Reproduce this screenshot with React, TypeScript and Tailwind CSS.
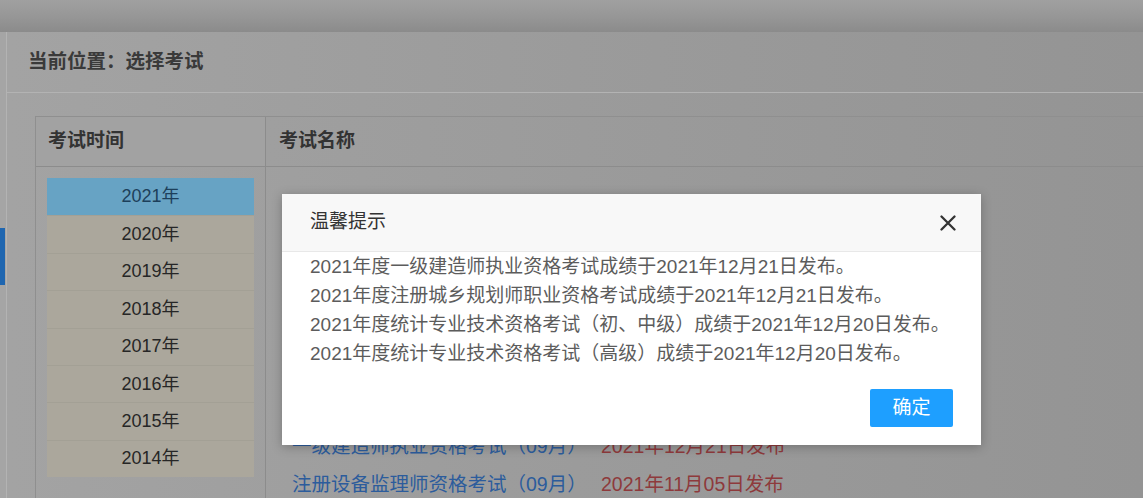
import React from "react";

const years = ["2021年", "2020年", "2019年", "2018年", "2017年", "2016年", "2015年", "2014年"];

const exams = [
  { name: "一级造价工程师考试（10月）", date: "2021年12月25日发布" },
  { name: "注册安全工程师考试（10月）", date: "2021年12月24日发布" },
  { name: "经济专业技术资格考试（10月）", date: "2021年12月22日发布" },
  { name: "注册城乡规划师考试（09月）", date: "2021年12月21日发布" },
  { name: "统计专业技术资格考试（10月）", date: "2021年12月20日发布" },
  { name: "监理工程师资格考试（09月）", date: "2021年12月10日发布" },
  { name: "一级建造师执业资格考试（09月）", date: "2021年12月21日发布" },
  { name: "注册设备监理师资格考试（09月）", date: "2021年11月05日发布" },
];

const notices = [
  "2021年度一级建造师执业资格考试成绩于2021年12月21日发布。",
  "2021年度注册城乡规划师职业资格考试成绩于2021年12月21日发布。",
  "2021年度统计专业技术资格考试（初、中级）成绩于2021年12月20日发布。",
  "2021年度统计专业技术资格考试（高级）成绩于2021年12月20日发布。",
];

export default function App() {
  return (
    <div className="relative w-[1143px] h-[498px] overflow-hidden bg-[#9a9a9a] font-['Liberation_Sans','Noto_Sans_CJK_SC',sans-serif]">
      <div className="flex flex-col h-full">
        <div className="h-[32px] shrink-0 bg-gradient-to-b from-[#a0a0a0] via-[#979797] to-[#8b8b8b]" />
        <div className="flex flex-1 min-h-0">
          <div className="w-[7px] shrink-0 bg-[#a5a5a5] border-r border-[#b3b3b3] pt-[196px]">
            <div className="w-[5px] h-[57px] bg-[#1f66b0]" />
          </div>
          <div className="flex-1 flex flex-col bg-gradient-to-r from-[#a3a3a3] via-[#9b9b9b] to-[#949494]">
            <div className="h-[61px] shrink-0 flex items-center pl-[21px] text-[19.5px] font-bold text-[#3a3a3a] border-b border-[#b3b3b3]">
              当前位置：选择考试
            </div>
            <div className="flex-1 pt-[23px] pl-[28px]">
              <div className="flex h-full border-l border-t border-[#8f8f8f]">
                <div className="w-[230px] shrink-0 border-r border-[#8c8c8c] flex flex-col">
                  <div className="h-[50px] shrink-0 flex items-center pl-[12px] text-[19px] font-bold text-[#333] border-b border-[#8c8c8c] bg-[#a2a2a2]">
                    考试时间
                  </div>
                  <div className="pt-[11px] px-[11px]">
                    {years.map((y, i) => (
                      <div
                        key={y}
                        className={
                          i === 0
                            ? "h-[37.4px] flex items-center justify-center text-[18px] text-[#1d3f5a] bg-[#67a3c4]"
                            : "h-[37.4px] flex items-center justify-center text-[18px] text-[#262626] bg-[#aba79c] border-t border-[#a3a095]"
                        }
                      >
                        {y}
                      </div>
                    ))}
                  </div>
                </div>
                <div className="flex-1 flex flex-col">
                  <div className="h-[50px] shrink-0 flex items-center pl-[13px] text-[19px] font-bold text-[#333] border-b border-[#8c8c8c] bg-gradient-to-r from-[#9f9f9f] to-[#949494]">
                    考试名称
                  </div>
                  <div className="pt-[33px] pl-[26px]">
                    {exams.map((e) => (
                      <div key={e.name} className="h-[38px] flex items-center text-[19.5px] whitespace-nowrap">
                        <span className="w-[309px] shrink-0 text-[#2c5c9c]">{e.name}</span>
                        <span className="text-[#8e3a3c]">{e.date}</span>
                      </div>
                    ))}
                  </div>
                </div>
              </div>
            </div>
          </div>
        </div>
      </div>

      <div className="absolute left-[282px] top-[194px] w-[699px] h-[251px] bg-white shadow-[0_2px_10px_rgba(0,0,0,0.25)] flex flex-col">
        <div className="h-[58px] shrink-0 flex items-center justify-between pl-[28px] pr-[25px] bg-[#f8f8f8] border-b border-[#e8e8e8]">
          <span className="text-[19px] text-[#333]">温馨提示</span>
          <svg width="16" height="16" viewBox="0 0 16 16" aria-hidden="true">
            <path d="M1.5 1.5 L14.5 14.5 M14.5 1.5 L1.5 14.5" stroke="#333" strokeWidth="2.3" strokeLinecap="round" />
          </svg>
        </div>
        <div className="pl-[28px] text-[19px] leading-[29px] text-[#5c5c5c] whitespace-nowrap">
          {notices.map((n) => (
            <div key={n}>{n}</div>
          ))}
        </div>
        <div className="flex justify-end pr-[28px] pt-[21px]">
          <button className="w-[83px] h-[38px] bg-[#1e9fff] text-white text-[19px] rounded-[2px]">确定</button>
        </div>
      </div>
    </div>
  );
}
